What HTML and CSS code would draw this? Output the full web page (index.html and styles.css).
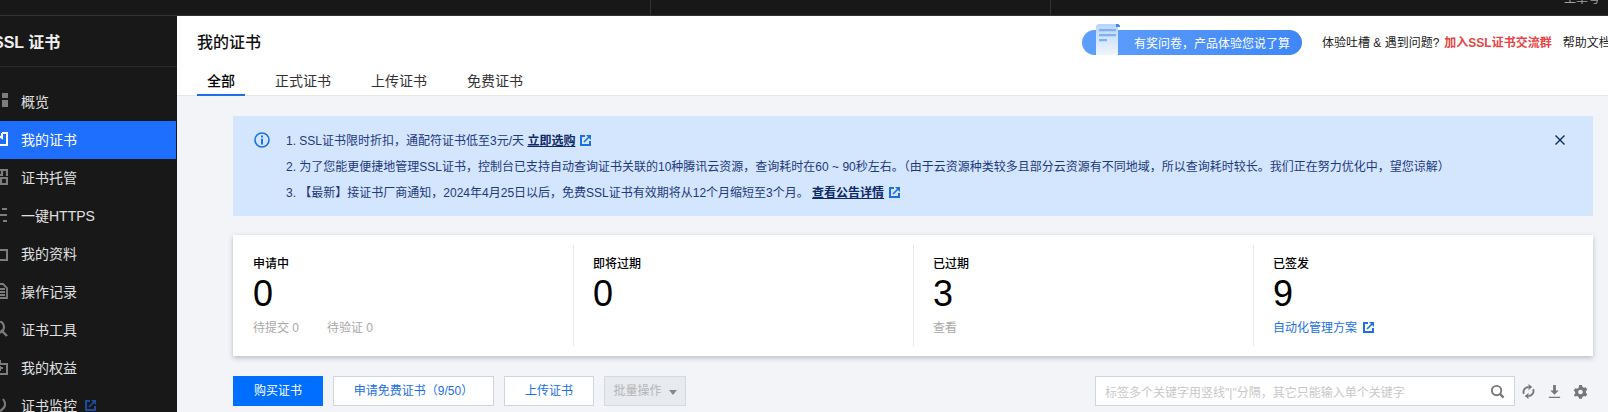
FILE: index.html
```html
<!DOCTYPE html>
<html lang="zh-CN">
<head>
<meta charset="utf-8">
<title>我的证书</title>
<link rel="stylesheet" href="styles.css">
</head>
<body>
<svg class="defs" width="0" height="0" aria-hidden="true">
  <symbol id="ext" viewBox="0 0 11 11">
    <path fill="none" stroke="currentColor" stroke-width="2" d="M5 1H1v9h9V6"/>
    <path fill="none" stroke="currentColor" stroke-width="1.600" d="M4 7 9 2"/>
    <path fill="currentColor" d="M6 0h5v5z"/>
  </symbol>
</svg>
<div class="topbar">
  <div class="top-cell top-first"></div>
  <div class="top-cell top-second"></div>
  <div class="top-cell top-last"><span class="top-text">工单号</span></div>
</div>
<div class="app">
  <aside class="sidebar">
    <div class="side-head"><span class="side-title">SSL 证书</span></div>
    <nav class="side-nav">
      <a class="side-item"><svg class="side-icon" viewBox="0 0 16 16"><path fill="currentColor" d="M10 0h6v5h-6zM10 7h6v7h-6z M0 0h6v6H0z"/></svg><span>概览</span></a>
      <a class="side-item is-active"><svg class="side-icon" viewBox="0 0 16 16"><path fill="none" stroke="currentColor" stroke-width="2" d="M1 2h3M10 2h5v12H1V2M4 2v5l3-2 3 2V2"/></svg><span>我的证书</span></a>
      <a class="side-item"><svg class="side-icon" viewBox="0 0 16 16"><path fill="none" stroke="currentColor" stroke-width="2.200" d="M2 1h8v5H2zM9 1h6v6M9 9h6v6H9z"/></svg><span>证书托管</span></a>
      <a class="side-item"><svg class="side-icon" viewBox="0 0 16 16"><path fill="none" stroke="currentColor" stroke-width="2" d="M0 2h6M10 2h5M0 8h3M8 8h7M0 14h7M11 14h4"/></svg><span>一键HTTPS</span></a>
      <a class="side-item"><svg class="side-icon" viewBox="0 0 16 16"><path fill="none" stroke="currentColor" stroke-width="2" d="M1 3h5l1 2h8v10H1z"/></svg><span>我的资料</span></a>
      <a class="side-item"><svg class="side-icon" viewBox="0 0 16 16"><path fill="none" stroke="currentColor" stroke-width="1.800" d="M2 1h9l4 4v10H2zM7 6h6M7 9h6M7 12h6"/></svg><span>操作记录</span></a>
      <a class="side-item"><svg class="side-icon" viewBox="0 0 16 16"><circle cx="6" cy="6" r="6" fill="none" stroke="currentColor" stroke-width="2.200"/><path stroke="currentColor" stroke-width="2.400" d="m9 9 6 6"/></svg><span>证书工具</span></a>
      <a class="side-item"><svg class="side-icon" viewBox="0 0 16 16"><path fill="none" stroke="currentColor" stroke-width="2" d="M1 5h14v10H1zM8 1v4M5 9h6M8 7v5"/></svg><span>我的权益</span></a>
      <a class="side-item"><svg class="side-icon" viewBox="0 0 16 16"><path fill="none" stroke="currentColor" stroke-width="2" d="M3 14c4 1 9-1 10-6 .4-2-.6-4-2-6"/></svg><span>证书监控</span><svg class="ext ext-side"><use href="#ext"/></svg></a>
    </nav>
  </aside>
  <main class="main">
    <header class="page-head">
      <div class="head-row">
        <h1 class="page-title">我的证书</h1>
        <div class="head-right">
          <a class="promo">
            <svg class="promo-doc" viewBox="0 0 24 31"><defs><linearGradient id="docfill" x1="0" y1="0" x2="0" y2="1"><stop offset="0" stop-color="#b5d4fb"/><stop offset="1" stop-color="#f0f6ff"/></linearGradient></defs><path fill="url(#docfill)" d="M2 0h20v31H0V2z"/><path fill="#3f86f7" d="M20 0h1.500a2.500 2.500 0 0 1 2.500 3H20z"/><path fill="#7fb0f5" d="M3 5h17v2.200H3zM3 10h17v2.200H3zM3 15h8v2.200H3z"/></svg>
            <span class="promo-text">有奖问卷，产品体验您说了算</span>
          </a>
          <span class="head-note">体验吐槽 &amp; 遇到问题?</span>
          <a class="head-red">加入SSL证书交流群</a>
          <a class="head-link">帮助文档</a>
        </div>
      </div>
      <div class="tabs">
        <a class="tab is-active">全部</a>
        <a class="tab">正式证书</a>
        <a class="tab">上传证书</a>
        <a class="tab">免费证书</a>
      </div>
    </header>
    <div class="content">
      <section class="notice">
        <svg class="notice-icon" viewBox="0 0 16 16"><circle cx="8" cy="8" r="7" fill="none" stroke="currentColor" stroke-width="1.600"/><path fill="currentColor" d="M7 3.500h2v2H7zM7 6.800h2v5.700H7z"/></svg>
        <div class="notice-body">
          <p class="notice-line">1. SSL证书限时折扣，通配符证书低至3元/天 <a class="notice-link">立即选购</a><svg class="ext ext-notice"><use href="#ext"/></svg></p>
          <p class="notice-line">2. 为了您能更便捷地管理SSL证书，控制台已支持自动查询证书关联的10种腾讯云资源，查询耗时在60 ~ 90秒左右。（由于云资源种类较多且部分云资源有不同地域，所以查询耗时较长。我们正在努力优化中，望您谅解）</p>
          <p class="notice-line">3. 【最新】接证书厂商通知，2024年4月25日以后，免费SSL证书有效期将从12个月缩短至3个月。 <a class="notice-link">查看公告详情</a><svg class="ext ext-notice"><use href="#ext"/></svg></p>
        </div>
        <svg class="notice-close" viewBox="0 0 10 10"><path fill="none" stroke="currentColor" stroke-width="1.400" d="m.5.500 9 9M9.500.500l-9 9"/></svg>
      </section>
      <section class="stats">
        <div class="stat">
          <div class="stat-label">申请中</div>
          <div class="stat-num">0</div>
          <div class="stat-sub"><span class="sub-item">待提交 0</span><span class="sub-item">待验证 0</span></div>
        </div>
        <div class="stat">
          <div class="stat-label">即将过期</div>
          <div class="stat-num">0</div>
          <div class="stat-sub"></div>
        </div>
        <div class="stat">
          <div class="stat-label">已过期</div>
          <div class="stat-num">3</div>
          <div class="stat-sub"><span>查看</span></div>
        </div>
        <div class="stat">
          <div class="stat-label">已签发</div>
          <div class="stat-num">9</div>
          <div class="stat-sub"><a class="stat-link">自动化管理方案</a><svg class="ext ext-stat"><use href="#ext"/></svg></div>
        </div>
      </section>
      <section class="toolbar">
        <a class="btn btn-primary">购买证书</a>
        <a class="btn btn-free">申请免费证书（9/50）</a>
        <a class="btn btn-upload">上传证书</a>
        <a class="btn btn-disabled">批量操作<i class="caret"></i></a>
        <div class="search">
          <span class="search-ph">标签多个关键字用竖线"|"分隔，其它只能输入单个关键字</span>
          <svg class="tool-icon" viewBox="0 0 16 16"><circle cx="7" cy="7" r="5" fill="none" stroke="currentColor" stroke-width="2"/><path stroke="currentColor" stroke-width="2.400" d="m10.500 10.500 4 4"/></svg>
        </div>
        <div class="tools">
          <svg class="tool-icon" viewBox="0 0 16 16"><path fill="none" stroke="currentColor" stroke-width="2" d="M3 10.500C1.800 7 4 3.500 8 3.200M13 5.500C14.200 9 12 12.500 8 12.800"/><path fill="currentColor" d="M8 0v6.500l4-3.200zM8 16V9.500l-4 3.200z"/></svg>
          <svg class="tool-icon" viewBox="0 0 16 16"><path fill="currentColor" d="M6.500 1h3v6h3L8 11.500 3.500 7h3zM2 13.500h12V15H2z"/></svg>
          <svg class="tool-icon" viewBox="0 0 16 16"><path fill="currentColor" fill-rule="evenodd" d="M6.500 1h3l.5 2 1.700 1 2-.6 1.500 2.600-1.500 1.400v2l1.500 1.400-1.500 2.600-2-.6-1.700 1-.5 2h-3l-.5-2-1.700-1-2 .6L.8 11.800l1.500-1.400v-2L.8 7l1.500-2.600 2 .6L6 4zM8 6a2.500 2.500 0 1 0 0 5 2.500 2.500 0 0 0 0-5z"/></svg>
        </div>
      </section>
    </div>
  </main>
</div>
</body>
</html>
```
FILE: styles.css
```css
* { box-sizing: border-box; }
html, body { margin: 0; padding: 0; height: 412px; overflow: hidden; }
body {
  display: flex;
  flex-direction: column;
  background: #f2f4f8;
  font-family: "Liberation Sans", "Noto Sans CJK SC", sans-serif;
  font-size: 12px;
  color: #000;
}
.defs { position: absolute; }
a { color: inherit; text-decoration: none; }
p, h1 { margin: 0; }

.topbar {
  flex: none;
  height: 16px;
  display: flex;
  background: #181818;
  border-bottom: 1px solid #333;
  overflow: hidden;
}
.top-cell { height: 15px; }
.top-first { width: 651px; border-right: 1px solid #333; }
.top-second { width: 400px; border-right: 1px solid #333; }
.top-last { flex: 1; display: flex; justify-content: flex-end; padding-right: 8px; }
.top-text { margin-top: -10px; line-height: 18px; color: #a0a0a0; }

.app { flex: 1; display: flex; min-height: 0; }
.sidebar {
  flex: none;
  width: 177px;
  background: #181818;
  color: #e0e0e0;
  overflow: hidden;
}
.side-head {
  height: 51px;
  display: flex;
  align-items: center;
  border-bottom: 1px solid #2b2b2b;
  margin-bottom: 16px;
  padding-bottom: 1px;
}
.side-title { margin-left: -7px; font-size: 16px; font-weight: 700; color: #f0f0f0; white-space: nowrap; }
.side-nav { display: flex; flex-direction: column; margin-right: 1px; }
.side-item {
  flex: none;
  height: 38px;
  display: flex;
  align-items: center;
  gap: 13px;
  margin-left: -8px;
  padding-bottom: 2px;
  font-size: 14px;
  color: #e0e0e0;
  white-space: nowrap;
}
.side-item.is-active { background: #1f6fff; color: #fff; }
.side-icon { flex: none; width: 16px; height: 16px; color: #7d7d7d; }
.is-active .side-icon { color: #fff; }
.ext { flex: none; display: inline-block; width: 11px; height: 11px; }
.ext-side { margin-left: -5px; color: #1d4c9e; }
.ext-notice { margin-left: 5px; vertical-align: -1px; color: #1b70e6; }
.ext-stat { margin-left: 6px; vertical-align: -1px; color: #1b70e6; }

.main { flex: 1; min-width: 0; display: flex; flex-direction: column; }
.page-head {
  flex: none;
  height: 80px;
  background: #fff;
  border-bottom: 1px solid #e5e8ee;
  padding-left: 20px;
  display: flex;
  flex-direction: column;
}
.head-row { flex: none; height: 50px; display: flex; align-items: center; justify-content: space-between; }
.page-title { font-size: 16px; font-weight: 500; color: #111; }
.head-right { display: flex; align-items: center; white-space: nowrap; width: 526px; flex: none; overflow: hidden; height: 50px; }
.promo {
  flex: none;
  width: 220px;
  height: 25px;
  margin-top: 3px;
  border-radius: 13px;
  background: linear-gradient(90deg, #5f9ffb, #3f86f7);
  display: flex;
  align-items: center;
  padding-left: 14px;
  color: #fff;
}
.promo-doc { flex: none; width: 24px; height: 31px; margin-top: -6px; }
.promo-text { margin-left: 14px; }
.head-note { margin-left: 20px; color: #222; }
.head-red { margin-left: 5px; color: #e54545; font-weight: 700; }
.head-link { margin-left: 11px; color: #222; }

.tabs { flex: none; display: flex; gap: 20px; height: 30px; }
.tab {
  padding: 0 10px;
  height: 30px;
  line-height: 30px;
  font-size: 14px;
  color: #333;
  border-bottom: 2px solid transparent;
}
.tab.is-active { color: #000; font-weight: 500; border-bottom-color: #1b70e6; }

.content { flex: 1; padding: 20px 15px 0 56px; display: flex; flex-direction: column; gap: 19px; min-height: 0; }
.notice {
  flex: none;
  height: 100px;
  background: #d4e5fe;
  color: #1c3a7c;
  display: flex;
  padding: 16px 28px 0 21px;
}
.notice-icon { flex: none; width: 16px; height: 16px; color: #1b70e6; }
.notice-body { flex: 1; margin: 1px 0 0 16px; }
.notice-line { height: 26px; line-height: 16px; white-space: nowrap; }
.notice-link { color: #0c2a66; font-weight: 700; text-decoration: underline; }
.notice-close { flex: none; width: 10px; height: 10px; margin-top: 3px; color: #0c2a66; }

.stats {
  flex: none;
  height: 121px;
  background: #fff;
  display: flex;
  padding: 10px 0;
  box-shadow: 0 2px 5px rgba(50, 60, 90, .3);
}
.stat { flex: 1 0 0; padding: 9px 0 0 19px; border-left: 1px solid #e5e8ee; }
.stat:first-child { border-left: 0; padding-left: 20px; }
.stat-label { height: 20px; line-height: 20px; font-weight: 500; color: #000; }
.stat-num { height: 42px; margin-top: -1px; line-height: 42px; font-size: 36px; color: #000; }
.stat-sub { height: 20px; line-height: 20px; margin-top: 3px; color: #a8a8a8; white-space: nowrap; }
.sub-item { display: inline-block; width: 74px; }
.stat-link { color: #1b70e6; }

.toolbar { flex: none; height: 30px; margin-top: 1px; display: flex; gap: 10px; }
.btn {
  flex: none;
  height: 30px;
  line-height: 28px;
  text-align: center;
  background: #fff;
  border: 1px solid #cfd5de;
  color: #1b70e6;
  white-space: nowrap;
}
.btn-primary { width: 90px; background: #006eff; border-color: #006eff; color: #fff; }
.btn-free { width: 161px; }
.btn-upload { width: 90px; }
.btn-disabled { width: 82px; background: #e7eaef; border-color: #d5d9e0; color: #b5b5b5; }
.caret {
  display: inline-block;
  margin-left: 7px;
  vertical-align: 0;
  border: 4px solid transparent;
  border-top: 5px solid #888;
  border-bottom: 0;
  width: 0;
  height: 0;
}
.search {
  flex: none;
  width: 420px;
  height: 30px;
  margin-left: auto;
  margin-right: -4px;
  background: #fff;
  border: 1px solid #cfd5de;
  display: flex;
  align-items: center;
  justify-content: space-between;
  padding: 0 9px;
  white-space: nowrap;
}
.search-ph { color: #c8c8c8; }
.tool-icon { flex: none; width: 15px; height: 15px; color: #777; }
.tools { flex: none; display: flex; align-items: center; gap: 11px; width: 72px; }
```
